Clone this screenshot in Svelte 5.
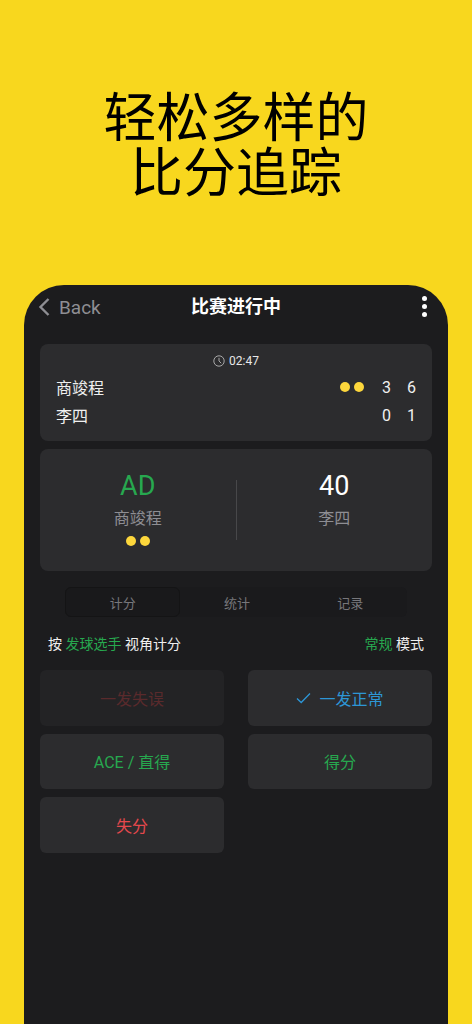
<script>
  const fontNote = "score screen";
</script>

<div class="page" data-note={fontNote}>
  <h1>轻松多样的<br />比分追踪</h1>

  <div class="phone">
    <div class="nav">
      <div class="back">
        <svg width="12" height="20" viewBox="0 0 12 20"><path d="M10.5 2 L2.5 10 L10.5 18" fill="none" stroke="#8e8e93" stroke-width="2.4" /></svg>
        <span>Back</span>
      </div>
      <div class="title">比赛进行中</div>
      <div class="more"><i></i><i></i><i></i></div>
    </div>

    <div class="card score">
      <div class="timer">
        <svg width="12" height="12" viewBox="0 0 12 12"><circle cx="6" cy="6" r="5.2" fill="none" stroke="#b5b5b5" stroke-width="0.9" /><path d="M6 2.8 V6 L8.2 8.2" fill="none" stroke="#b5b5b5" stroke-width="0.9" /></svg>
        <span>02:47</span>
      </div>
      <div class="row">
        <span class="name">商竣程</span>
        <span class="dots"><b></b><b></b></span>
        <span class="num">3</span><span class="num">6</span>
      </div>
      <div class="row">
        <span class="name">李四</span>
        <span class="num">0</span><span class="num">1</span>
      </div>
    </div>

    <div class="card points">
      <div class="side">
        <div class="pt green">AD</div>
        <div class="who">商竣程</div>
        <span class="dots"><b></b><b></b></span>
      </div>
      <div class="rule"></div>
      <div class="side">
        <div class="pt">40</div>
        <div class="who">李四</div>
      </div>
    </div>

    <div class="tabs">
      <div class="tab on">计分</div>
      <div class="tab">统计</div>
      <div class="tab">记录</div>
    </div>

    <div class="mode">
      <span>按 <em>发球选手</em> 视角计分</span>
      <span><em>常规</em> 模式</span>
    </div>

    <div class="btns">
      <div class="btn dim fault">一发失误</div>
      <div class="btn blue">
        <svg width="15" height="12" viewBox="0 0 15 12"><path d="M1 6.5 L5.2 10.5 L14 1.5" fill="none" stroke="#2d96d6" stroke-width="1.3" /></svg>
        一发正常
      </div>
      <div class="btn green">ACE / 直得</div>
      <div class="btn green">得分</div>
      <div class="btn red">失分</div>
    </div>
  </div>
</div>

<style>
  :global(body) {
    margin: 0;
    background: #f8d71e;
  }

  .page {
    width: 472px;
    height: 1024px;
    overflow: hidden;
    box-sizing: border-box;
    padding-top: 87px;
    background: #f8d71e;
    font-family: Roboto, "Noto Sans CJK SC", sans-serif;
  }

  h1 {
    margin: 0 0 57px;
    height: 141px;
    text-align: center;
    font-size: 53px;
    line-height: 55px;
    font-weight: 400;
    color: #000;
    font-family: "Noto Sans CJK SC", sans-serif;
  }

  .phone {
    margin: 0 24px;
    height: 739px;
    box-sizing: border-box;
    padding: 0 16px;
    background: #1c1c1e;
    border-radius: 40px 40px 0 0;
  }

  .nav {
    height: 59px;
    display: flex;
    align-items: flex-start;
    position: relative;
    padding-top: 10px;
    box-sizing: border-box;
  }

  .back {
    display: flex;
    align-items: center;
    gap: 9px;
    height: 24px;
    margin-top: 0;
    color: #8e8e93;
    font-size: 19px;
    margin-left: -2px;
  }

  .title {
    position: absolute;
    left: 0;
    right: 0;
    top: 10px;
    text-align: center;
    font-size: 18px;
    line-height: 24px;
    font-weight: 700;
    color: #fff;
  }

  .more {
    margin-left: auto;
    margin-right: 5px;
    display: flex;
    flex-direction: column;
    gap: 3px;
    padding-top: 1px;
  }

  .more i {
    width: 5px;
    height: 5px;
    border-radius: 50%;
    background: #fff;
  }

  .card {
    background: #2c2c2e;
    border-radius: 8px;
    color: #fff;
  }

  .score {
    height: 97px;
    box-sizing: border-box;
    padding: 9px 16px 0;
    margin-bottom: 8px;
  }

  .timer {
    display: flex;
    justify-content: center;
    align-items: center;
    gap: 4px;
    height: 16px;
    font-size: 12px;
    color: #e8e8e8;
    margin-bottom: 4px;
  }

  .row {
    display: flex;
    align-items: center;
    height: 28px;
    font-size: 16px;
    color: #f0f0f0;
  }

  .name {
    margin-right: auto;
  }

  .num {
    width: 25px;
    text-align: right;
  }

  .row .dots {
    margin-right: 2px;
  }

  .dots {
    display: inline-flex;
    gap: 4px;
  }

  .dots b {
    width: 10px;
    height: 10px;
    border-radius: 50%;
    background: #fdd73c;
  }

  .points {
    height: 122px;
    display: flex;
    align-items: flex-start;
    margin-bottom: 16px;
  }

  .side {
    flex: 1;
    text-align: center;
    padding-top: 20px;
  }

  .pt {
    font-size: 27px;
    line-height: 34px;
    color: #fff;
  }

  .pt.green {
    color: #27a84f;
  }

  .who {
    font-size: 16px;
    line-height: 24px;
    margin-top: 4px;
    color: #8e8e93;
  }

  .side .dots {
    margin-top: 5px;
    display: flex;
    justify-content: center;
  }

  .rule {
    width: 1px;
    height: 60px;
    margin-top: 31px;
    background: #48484a;
  }

  .tabs {
    margin: 0 25px;
    height: 30px;
    display: flex;
    background: #1a1a1c;
    border-radius: 6px;
  }

  .tab {
    flex: 1;
    display: flex;
    align-items: center;
    justify-content: center;
    font-size: 13px;
    color: #77777b;
    border-radius: 6px;
  }

  .tab.on {
    background: #19191b;
    border: 1px solid #141415;
    box-sizing: border-box;
  }

  .mode {
    display: flex;
    justify-content: space-between;
    margin-top: 16px;
    padding: 0 8px;
    height: 22px;
    line-height: 22px;
    font-size: 14px;
    color: #efefef;
  }

  .mode em {
    font-style: normal;
    color: #27a84f;
  }

  .btns {
    margin-top: 15px;
    display: grid;
    grid-template-columns: 184px 184px;
    justify-content: space-between;
    row-gap: 8px;
  }

  .btn {
    height: 55.5px;
    border-radius: 6px;
    background: #2c2c2e;
    display: flex;
    align-items: center;
    justify-content: center;
    gap: 8px;
    font-size: 16px;
  }

  .btn.dim {
    background: #232325;
  }

  .fault {
    color: #5a2a2c;
  }

  .btn.blue {
    color: #2d96d6;
  }

  .btn.green {
    color: #27a84f;
  }

  .btn.red {
    color: #e5484d;
  }
</style>
